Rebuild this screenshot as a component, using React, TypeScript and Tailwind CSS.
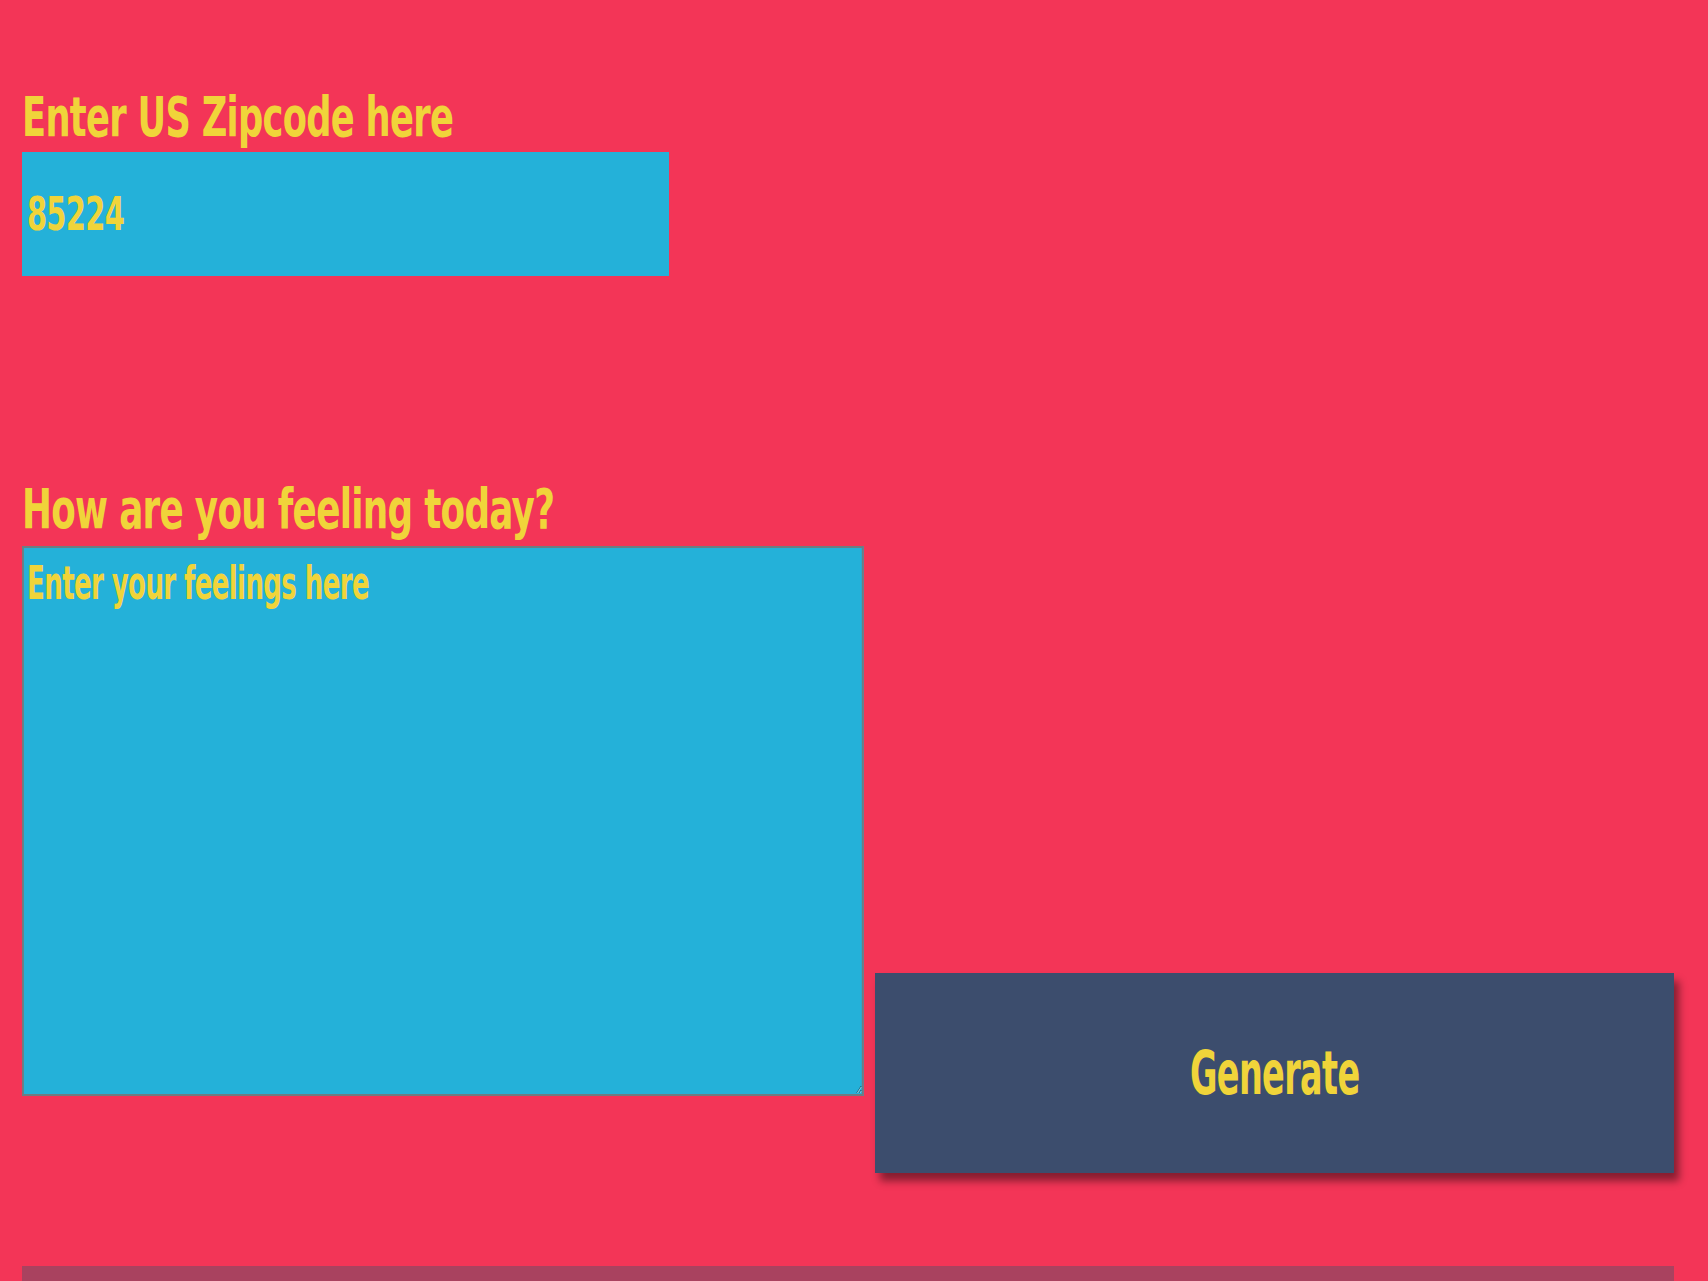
import { useState } from 'react'

// Oswald isn't available, so DejaVu Sans Condensed Bold is squeezed horizontally to match it
const font = { fontFamily: '"DejaVu Sans Condensed", "DejaVu Sans", sans-serif' }

export default function App() {
  const [zip, setZip] = useState('85224')
  const [feelings, setFeelings] = useState('')

  return (
    <div
      className="h-screen overflow-hidden bg-[#f33557] pl-[22px] pr-[34px] pt-[90px] font-stretch-condensed font-bold text-[#f0d43a]"
      style={font}
    >
      {/* Zipcode */}
      <label className="mb-[8px] block text-[56px] leading-[54px] tracking-[-1px]">
        <span className="inline-block origin-left scale-x-[0.7] whitespace-nowrap">Enter US Zipcode here</span>
      </label>
      <div className="h-[124px] w-[647px] overflow-hidden bg-[#24b1d9]">
        <input
          value={zip}
          onChange={(e) => setZip(e.target.value)}
          className="block h-[124px] w-[924px] origin-left scale-x-[0.7] bg-transparent px-[7px] font-stretch-condensed text-[46px] font-bold tracking-[-1px] text-[#f0d43a] outline-none"
          style={font}
        />
      </div>

      {/* Feelings */}
      <label className="mb-[10px] mt-[206px] block text-[56px] leading-[54px] tracking-[-1px]">
        <span className="inline-block origin-left scale-x-[0.71] whitespace-nowrap">How are you feeling today?</span>
      </label>
      <div className="flex items-start gap-[11px]">
        <div className="h-[550px] w-[842px] shrink-0 overflow-hidden">
          <textarea
            value={feelings}
            onChange={(e) => setFeelings(e.target.value)}
            placeholder="Enter your feelings here"
            className="block h-[550px] w-[1336px] origin-left scale-x-[0.63] border-x-[3.2px] border-y-2 border-[#6e7c82] bg-[#24b1d9] px-[5px] pt-[12px] font-stretch-condensed text-[46px] font-bold leading-[46px] tracking-[-1px] text-[#f0d43a] outline-none placeholder:text-[#f0d43a]"
            style={font}
          />
        </div>
        <button
          className="mt-[427px] h-[200px] flex-1 bg-[#3c4d6d] font-stretch-condensed text-[60px] font-bold tracking-[-1px] text-[#f0d43a] shadow-[5px_8px_8px_rgba(0,0,0,0.45)]"
          style={font}
        >
          <span className="inline-block scale-x-[0.62] whitespace-nowrap">Generate</span>
        </button>
      </div>

      <div className="mt-[93px] h-[40px] bg-[#a9425f]" />
    </div>
  )
}
